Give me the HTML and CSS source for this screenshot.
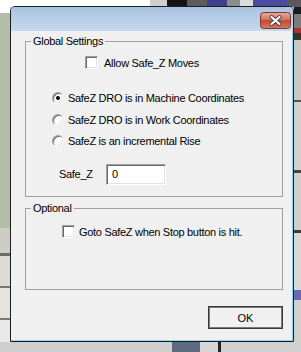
FILE: index.html
```html
<!DOCTYPE html>
<html>
<head>
<meta charset="utf-8">
<link rel="stylesheet" href="styles.css">
</head>
<body>
<div class="window">
  <div class="titlebar">
    <button class="close" aria-label="Close">
      <svg width="31" height="17" viewBox="0 0 31 17">
        <defs>
          <linearGradient id="cg" x1="0" y1="0" x2="0" y2="1">
            <stop offset="0" stop-color="#e8a898"/>
            <stop offset="0.45" stop-color="#d27462"/>
            <stop offset="0.5" stop-color="#c24a36"/>
            <stop offset="1" stop-color="#d47a62"/>
          </linearGradient>
        </defs>
        <rect x="0.5" y="0.5" width="30" height="16" rx="3" fill="url(#cg)" stroke="#7a3a30"/>
        <path d="M11.5 5 L19.5 12 M19.5 5 L11.5 12" stroke="#4a3a3a" stroke-width="4" stroke-linecap="round"/>
        <path d="M11.5 5 L19.5 12 M19.5 5 L11.5 12" stroke="#ffffff" stroke-width="2.2" stroke-linecap="round"/>
      </svg>
    </button>
  </div>
  <div class="content">
    <fieldset class="group g1">
      <legend>Global Settings</legend>
      <div class="row check-row first">
        <span class="box"></span><span class="lbl">Allow Safe_Z Moves</span>
      </div>
      <div class="row radio-row r1">
        <span class="radio on"></span><span class="lbl">SafeZ DRO is in Machine Coordinates</span>
      </div>
      <div class="row radio-row r2">
        <span class="radio"></span><span class="lbl">SafeZ DRO is in Work Coordinates</span>
      </div>
      <div class="row radio-row r3">
        <span class="radio"></span><span class="lbl">SafeZ is an incremental Rise</span>
      </div>
      <div class="row field-row">
        <span class="field-lbl">Safe_Z</span>
        <span class="input">0</span>
      </div>
    </fieldset>
    <fieldset class="group g2">
      <legend>Optional</legend>
      <div class="row check-row second">
        <span class="box"></span><span class="lbl">Goto SafeZ when Stop button is hit.</span>
      </div>
    </fieldset>
    <div class="actions">
      <button class="ok">OK</button>
    </div>
  </div>
</div>
</body>
</html>
```
FILE: styles.css
```css
html, body {
  margin: 0;
  padding: 0;
  height: 352px;
  overflow: hidden;
}
body {
  width: 301px;
  font-family: "Liberation Sans", Arial, sans-serif;
  font-size: 11px;
  letter-spacing: -0.3px;
  color: #000;
  padding-top: 6px;
  box-sizing: border-box;
  background:
    linear-gradient(to right, #ffffff 0 150px, #cfcfcf 150px 167px, #141414 167px 187px, #5c5c5c 187px 207px, #3d3f8f 207px 227px, #8c8c8c 227px 240px, #dcdcdc 240px 253px, #4b4c9e 253px 287px, #5a5a5a 287px) left top / 301px 7px no-repeat,
    linear-gradient(to right, #cfcfcf 0 172px, #5f6a80 172px 200px, #d6d6d6 200px 218px, #222 218px 221px, #d0d0d0 221px) left bottom / 301px 10px no-repeat,
    linear-gradient(to bottom, #ffffff 0 13px, #b3bea9 13px 228px, #cfccc5 228px 253px, #6a6a6a 253px 256px, #dedad4 256px 286px, #777 286px 288px, #e6e3de 288px 318px, #777 318px 320px, #e8e8e8 320px) left top / 10px 352px no-repeat,
    linear-gradient(to bottom, #1a1a1a 0 14px, #7a7a7a 14px 28px, #b03030 28px 33px, #333 33px 40px, #c8c8c8 40px 100px, #555 100px 102px, #d0d0d0 102px 170px, #444 170px 173px, #cfcfcf 173px 230px, #3a3a3a 230px 233px, #d8d8d8 233px 290px, #6a6ab0 290px 300px, #d0d0d0 300px) right top / 7px 352px no-repeat,
    #d4d4d4;
}
.window {
  margin-left: 10px;
  width: 284px;
  height: 336px;
  box-sizing: border-box;
  border: 1px solid #1e1e1e;
  border-radius: 5px 5px 0 0;
  background: #f0f0f0;
  box-shadow: inset -1px -1px 0 #8fd3f2;
  display: flex;
  flex-direction: column;
  overflow: hidden;
}
.titlebar {
  height: 24px;
  flex: none;
  background: linear-gradient(to bottom, #a9c3e0, #c6d9ed);
  display: flex;
  justify-content: flex-end;
  align-items: flex-start;
  padding: 5px 2px 0 0;
  box-sizing: border-box;
}
.close {
  border: 0;
  padding: 0;
  margin: 0;
  background: none;
  width: 31px;
  height: 17px;
  display: block;
}
.close svg { display: block; }
.content {
  padding: 4px 10px 0 14px;
}
.group {
  margin: 0;
  padding: 0 0 12px 0;
  border: 1px solid #a0a0a0;
  min-width: 0;
}
.group legend {
  margin-left: 5px;
  padding: 0 2px;
  line-height: 13px;
  height: 13px;
}
.row {
  display: flex;
  align-items: center;
  white-space: nowrap;
}
.check-row { height: 15px; }
.check-row.first { margin-top: 7px; padding-left: 59px; gap: 6px; }
.check-row.second { margin-top: 9px; padding-left: 36px; gap: 4px; }
.radio-row { padding-left: 26px; gap: 4px; }
.r1 { margin-top: 17px; height: 22px; }
.r2 { height: 21px; }
.r3 { height: 22px; }
.field-row { margin-top: 12px; height: 20px; padding-left: 33px; }
.field-lbl { width: 47px; }
.box {
  width: 13px;
  height: 13px;
  box-sizing: border-box;
  background: #fff;
  border: 1px solid;
  border-color: #a0a0a0 #ffffff #ffffff #a0a0a0;
  box-shadow: inset 1px 1px 0 #696969, inset -1px -1px 0 #e3e3e3;
  flex: none;
}
.radio {
  width: 12px;
  height: 12px;
  box-sizing: border-box;
  border-radius: 50%;
  background: #fff;
  border: 1px solid;
  border-color: #a0a0a0 #f8f8f8 #f8f8f8 #a0a0a0;
  box-shadow: inset 1px 1px 0 #696969, inset -1px -1px 0 #e3e3e3;
  flex: none;
  display: flex;
  align-items: center;
  justify-content: center;
}
.radio.on::after {
  content: "";
  width: 4px;
  height: 4px;
  border-radius: 50%;
  background: #000;
}
.input {
  width: 60px;
  height: 21px;
  box-sizing: border-box;
  background: #fff;
  border: 1px solid;
  border-color: #a0a0a0 #ffffff #ffffff #a0a0a0;
  box-shadow: inset 1px 1px 0 #696969, inset -1px -1px 0 #e3e3e3;
  padding: 3px 0 0 5px;
  line-height: 13px;
}
.g2 {
  margin-top: 5px;
  padding-bottom: 50px;
}
.actions {
  display: flex;
  justify-content: flex-end;
  margin-top: 16px;
}
.ok {
  width: 75px;
  height: 23px;
  box-sizing: border-box;
  font-family: "Liberation Sans", Arial, sans-serif;
  font-size: 11px;
  color: #000;
  background: #f0f0f0;
  border: 1px solid #3a3a3a;
  box-shadow: inset 0 0 0 1px #7a7a7a;
  padding: 0;
  margin: 0;
}
```
